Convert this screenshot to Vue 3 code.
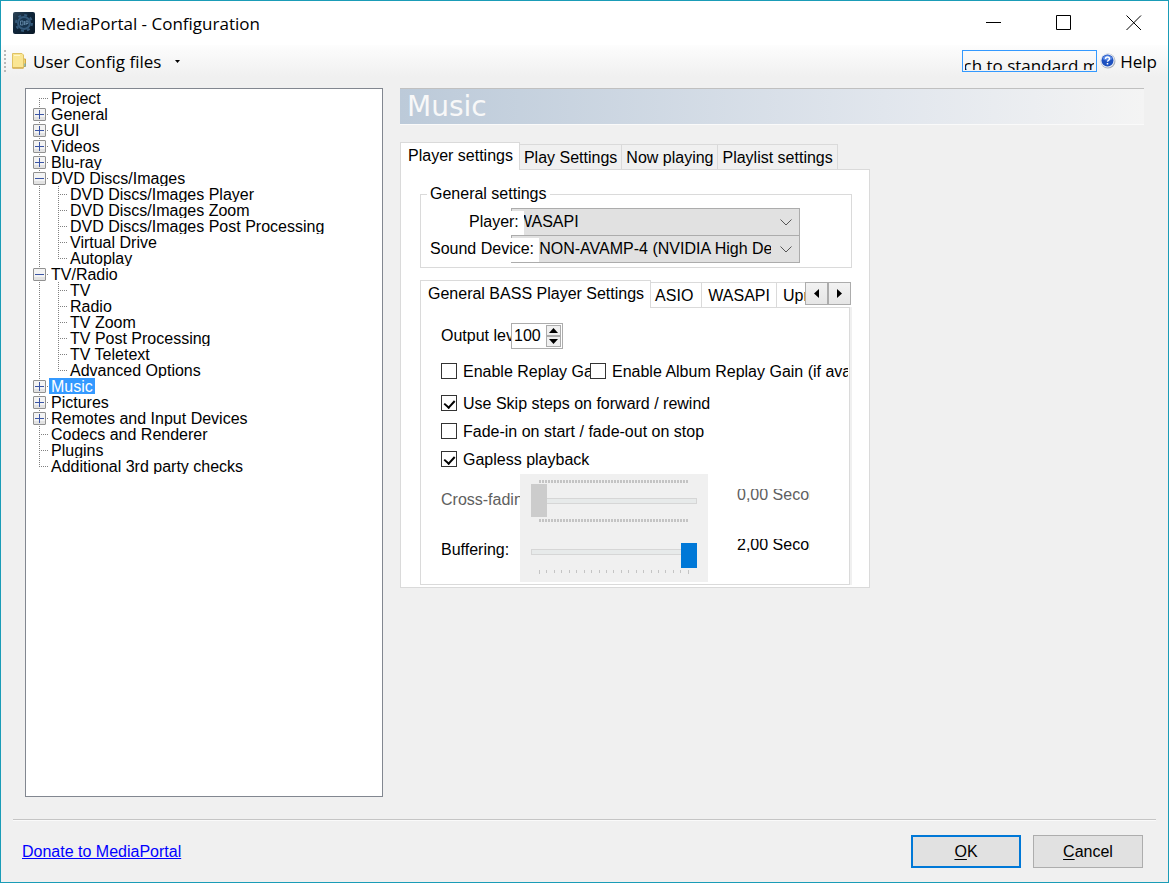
<script setup>
import { ref } from 'vue'

const tree = [
  { name: 'Project' },
  { name: 'General', sign: '+' },
  { name: 'GUI', sign: '+' },
  { name: 'Videos', sign: '+' },
  { name: 'Blu-ray', sign: '+' },
  {
    name: 'DVD Discs/Images',
    sign: '-',
    children: [
      'DVD Discs/Images Player',
      'DVD Discs/Images Zoom',
      'DVD Discs/Images Post Processing',
      'Virtual Drive',
      'Autoplay'
    ]
  },
  {
    name: 'TV/Radio',
    sign: '-',
    children: ['TV', 'Radio', 'TV Zoom', 'TV Post Processing', 'TV Teletext', 'Advanced Options']
  },
  { name: 'Music', sign: '+' },
  { name: 'Pictures', sign: '+' },
  { name: 'Remotes and Input Devices', sign: '+' },
  { name: 'Codecs and Renderer' },
  { name: 'Plugins' },
  { name: 'Additional 3rd party checks' }
]
const selected = ref('Music')

const tabs = ['Player settings', 'Play Settings', 'Now playing', 'Playlist settings']
const activeTab = ref('Player settings')
const bassTabs = ['General BASS Player Settings', 'ASIO', 'WASAPI', 'Upmixing']
const activeBassTab = ref('General BASS Player Settings')

const output = ref(100)
const replayGain = ref(false)
const albumGain = ref(false)
const skipSteps = ref(true)
const fade = ref(false)
const gapless = ref(true)
const crossFade = ref(0)
const buffering = ref(20)
</script>

<template>
  <div class="window">
    <header class="titlebar">
      <svg class="logo" viewBox="0 0 22 22" aria-hidden="true">
        <defs>
          <linearGradient id="logo-bg" x1="0" y1="0" x2="1" y2="1">
            <stop offset="0" stop-color="#2f4658" />
            <stop offset="0.4" stop-color="#10273c" />
            <stop offset="1" stop-color="#0a1826" />
          </linearGradient>
        </defs>
        <rect width="22" height="22" rx="2" fill="url(#logo-bg)" />
        <circle cx="11" cy="11" r="8" fill="none" stroke="#34597a" stroke-width="2" stroke-dasharray="3 3.28" />
        <circle cx="11" cy="11" r="6" fill="#17344e" stroke="#34597a" stroke-width="2" />
        <path d="M7.500 9h2.500v4h-2.500zM11.500 13v-4M13 13v-4h2v2.500h-2" fill="none" stroke="#6c93b2" stroke-width="0.800" />
      </svg>
      <span class="title">MediaPortal - Configuration</span>
      <div class="window-buttons">
        <button type="button" aria-label="Minimize">
          <svg viewBox="0 0 16 16"><path d="M0 7.500h15" /></svg>
        </button>
        <button type="button" aria-label="Maximize">
          <svg viewBox="0 0 16 16"><path d="M.5.5h14v14h-14z" /></svg>
        </button>
        <button type="button" aria-label="Close">
          <svg viewBox="0 0 16 16"><path d="M.5.5l14.500 14.500M15 .5l-14.500 14.500" /></svg>
        </button>
      </div>
    </header>

    <nav class="toolbar">
      <span class="grip"></span>
      <button type="button" class="tool">
        <svg class="folder" viewBox="0 0 15 17" aria-hidden="true">
          <path d="M11 6h2.500v7.500h-2.500z" fill="#f2d777" stroke="#d3aa41" />
          <path d="M12.500 10.500h1v3h-1z" fill="#4aa5df" />
          <path d="M.5.5h9.500l1.500 1.500v13h-11z" fill="#fae694" stroke="#dfc264" />
          <path d="M.5 15h11" stroke="#c99c39" />
          <path d="M2 2.500h6" stroke="#fff7cb" />
        </svg>
        <span class="caption">User Config files</span>
        <svg class="caret" viewBox="0 0 5 3" aria-hidden="true"><path d="M0 0h5l-2.500 3z" /></svg>
      </button>
      <button type="button" class="mode"><span>Switch to standard mode</span></button>
      <button type="button" class="tool help">
        <svg class="help-icon" viewBox="0 0 16 16" aria-hidden="true">
          <circle cx="8" cy="8" r="7.500" fill="#a9b0bd" />
          <circle cx="7.500" cy="7.500" r="7" fill="#e8edf5" />
          <circle cx="7.500" cy="7.500" r="6" fill="#1d50bf" />
          <path d="M2.500 6a5.200 5.200 0 0 1 10 0q-5 3-10 0z" fill="#5c8be6" />
          <path d="M5.500 6q0-2 2-2t2 1.800q0 1-1 1.500t-1 1.500M7.500 10v1.500" fill="none" stroke="#fff" stroke-width="1.500" />
        </svg>
        <span class="caption">Help</span>
      </button>
    </nav>

    <main class="body">
      <div class="tree-box">
        <ul class="tree" role="tree">
          <li v-for="node in tree" :key="node.name" class="node" role="treeitem">
            <div class="row">
              <span class="guide">
                <svg v-if="node.sign" class="sign" viewBox="0 0 13 13" aria-hidden="true">
                  <rect x="0.5" y="0.5" width="12" height="12" rx="0.500" fill="#f3f3f3" stroke="#919191" />
                  <path d="M1 9h11v3h-11z" fill="#e2e2e2" />
                  <path d="M2 6.500h9" stroke="#3b55a5" />
                  <path v-if="node.sign === '+'" d="M6.500 2v9" stroke="#3b55a5" />
                </svg>
              </span>
              <button type="button" :class="{ chosen: selected === node.name }" @click="selected = node.name">
                {{ node.name }}
              </button>
            </div>
            <ul v-if="node.children" class="children" role="group">
              <li v-for="child in node.children" :key="child" class="child" role="treeitem">
                <div class="row">
                  <span class="guide"></span>
                  <button type="button" :class="{ chosen: selected === child }" @click="selected = child">
                    {{ child }}
                  </button>
                </div>
              </li>
            </ul>
          </li>
        </ul>
      </div>

      <section class="content">
        <h1>Music</h1>

        <div class="player">
          <div class="tabs" role="tablist">
            <button
              v-for="tab in tabs"
              :key="tab"
              type="button"
              role="tab"
              :aria-selected="activeTab === tab"
              @click="activeTab = tab"
            >{{ tab }}</button>
          </div>
          <div class="page" role="tabpanel">
            <fieldset>
              <legend>General settings</legend>
              <div class="combo-row">
                <label for="player" class="short">Player:</label>
                <select id="player"><option>WASAPI</option></select>
                <svg class="chevron" viewBox="0 0 12 7" aria-hidden="true"><path d="M.5.5l5.500 5.500l5.500-5.500" /></svg>
              </div>
              <div class="combo-row">
                <label for="device">Sound Device:</label>
                <select id="device"><option>DENON-AVAMP-4 (NVIDIA High Definition Audio)</option></select>
                <svg class="chevron" viewBox="0 0 12 7" aria-hidden="true"><path d="M.5.5l5.500 5.500l5.500-5.500" /></svg>
              </div>
            </fieldset>

            <div class="bass">
              <div class="bass-head">
                <div class="tabs" role="tablist">
                  <button
                    v-for="tab in bassTabs"
                    :key="tab"
                    type="button"
                    role="tab"
                    :aria-selected="activeBassTab === tab"
                    @click="activeBassTab = tab"
                  >{{ tab }}</button>
                </div>
                <div class="scroller">
                  <button type="button" aria-label="Scroll left">
                    <svg viewBox="0 0 5 9"><path d="M5 0v9l-5-4.500z" /></svg>
                  </button>
                  <button type="button" aria-label="Scroll right">
                    <svg viewBox="0 0 5 9"><path d="M0 0v9l5-4.500z" /></svg>
                  </button>
                </div>
              </div>
              <div class="bass-page" role="tabpanel">
                <div class="output-row">
                  <label for="output">Output level:</label>
                  <div class="spinner">
                    <input id="output" v-model.number="output" type="text" />
                    <div class="steps">
                      <button type="button" aria-label="Increase" @click="output++">
                        <svg viewBox="0 0 9 5"><path d="M0 5h9l-4.500-5z" /></svg>
                      </button>
                      <button type="button" aria-label="Decrease" @click="output--">
                        <svg viewBox="0 0 9 5"><path d="M0 0h9l-4.500 5z" /></svg>
                      </button>
                    </div>
                  </div>
                </div>
                <div class="checks">
                  <div class="gain-row">
                    <label class="check"><input v-model="replayGain" type="checkbox" />Enable Replay Gain</label>
                    <label class="check"><input v-model="albumGain" type="checkbox" />Enable Album Replay Gain (if available)</label>
                  </div>
                  <label class="check skip"><input v-model="skipSteps" type="checkbox" />Use Skip steps on forward / rewind</label>
                  <label class="check"><input v-model="fade" type="checkbox" />Fade-in on start / fade-out on stop</label>
                  <label class="check"><input v-model="gapless" type="checkbox" />Gapless playback</label>
                </div>
                <div class="slider-row cross">
                  <label for="cross">Cross-fading:</label>
                  <div class="slider">
                    <div class="dense-ticks"></div>
                    <input id="cross" v-model="crossFade" type="range" min="0" max="160" disabled />
                    <div class="dense-ticks"></div>
                  </div>
                  <output for="cross">0,00 Seconds</output>
                </div>
                <div class="slider-row buffer">
                  <label for="buffer">Buffering:</label>
                  <div class="slider">
                    <input id="buffer" v-model="buffering" type="range" min="0" max="20" />
                    <div class="ticks"><i v-for="n in 21" :key="n"></i></div>
                  </div>
                  <output for="buffer">2,00 Seconds</output>
                </div>
              </div>
            </div>
          </div>
        </div>
      </section>
    </main>

    <footer class="footer">
      <a href="#donate">Donate to MediaPortal</a>
      <div class="actions">
        <button type="button" class="primary"><u>O</u>K</button>
        <button type="button"><u>C</u>ancel</button>
      </div>
    </footer>
  </div>
</template>

<style>
body {
  background: #f0f0f0;
}
</style>

<style scoped>
* {
  box-sizing: border-box;
}
.window {
  min-height: 100vh;
  display: flex;
  flex-direction: column;
  border: 1px solid #1a9cb7;
  background: #f0f0f0;
  color: #000;
  font: 16px/18px "Liberation Sans", Arial, sans-serif;
}
button,
input,
select {
  margin: 0;
  padding: 0;
  font: inherit;
  color: inherit;
}
button {
  border: 0;
  background: none;
  white-space: nowrap;
}

.titlebar {
  display: flex;
  align-items: center;
  height: 44px;
  padding: 0 26px 0 12px;
  background: #fff;
}
.logo {
  width: 22px;
  height: 22px;
  margin-right: 6px;
}
.title,
.toolbar {
  font: 17px/24px "Open Sans", "Noto Sans", sans-serif;
}
.title {
  flex: 1;
  padding-top: 2px;
  white-space: nowrap;
}
.window-buttons {
  display: flex;
  gap: 54px;
}
.window-buttons button,
.window-buttons svg {
  display: block;
  width: 16px;
  height: 16px;
}
.window-buttons path {
  fill: none;
  stroke: #000;
}

.toolbar {
  display: flex;
  align-items: center;
  height: 32px;
  padding: 0 11px 0 3px;
  background: linear-gradient(#fdfdfd, #f0f0f0);
}
.grip {
  width: 2px;
  height: 22px;
  margin-right: 6px;
  background: repeating-linear-gradient(#b8b8b8 0 2px, transparent 2px 4px);
}
.tool {
  display: flex;
  align-items: center;
}
.caption {
  padding-top: 2px;
}
.folder {
  width: 15px;
  height: 17px;
  margin-right: 6px;
}
.caret {
  width: 5px;
  height: 3px;
  margin-left: 14px;
}
.mode {
  width: 135px;
  height: 22px;
  margin: 0 3px 0 auto;
  padding: 1px 2px;
  border: 1px solid #3399ff;
}
.mode span {
  display: flex;
  justify-content: center;
  height: 18px;
  overflow: hidden;
  line-height: 28px;
}
.help-icon {
  width: 16px;
  height: 16px;
  margin-right: 4px;
}

.body {
  flex: 1;
  display: flex;
  gap: 17px;
  padding: 11px 24px 22px;
}
.tree-box {
  flex: 0 0 358px;
  padding: 1px 7px;
  border: 1px solid #828790;
  background: #fff;
}
ul {
  margin: 0;
  padding: 0;
  list-style: none;
}
.row {
  display: flex;
  height: 16px;
}
.row button {
  height: 16px;
  padding: 1px 2px 0;
  overflow: hidden;
  line-height: 16px;
}
.row .chosen {
  background: #3399ff;
  color: #fff;
}
.guide {
  flex: 0 0 16px;
  height: 16px;
  padding-top: 2px;
  background:
    repeating-linear-gradient(#808080 0 1px, transparent 1px 2px) 6px 0 / 1px 100% no-repeat,
    repeating-linear-gradient(90deg, #808080 0 1px, transparent 1px 2px) 6px 8px / 9px 1px no-repeat;
}
.node:first-child .guide {
  background-position: 6px 8px, 6px 8px;
}
.node:last-child .guide,
.child:last-child .guide {
  background-size: 1px 8px, 9px 1px;
}
.sign {
  display: block;
  width: 13px;
  height: 13px;
}
.children {
  padding-left: 19px;
  background: repeating-linear-gradient(#808080 0 1px, transparent 1px 2px) 6px 0 / 1px 100% no-repeat;
}

.content {
  flex: 1;
  min-width: 0;
}
h1 {
  height: 37px;
  margin: 0 0 17px;
  padding-left: 7px;
  border-top: 1px solid #c0c0c0;
  border-bottom: 1px solid #fafafa;
  background: linear-gradient(90deg, #bccad9, #e1e6ed 65%, #f4f4f4);
  color: #f8f8f8;
  font: 28px/36px "DejaVu Sans", Verdana, sans-serif;
}
.player {
  max-width: 470px;
}
.tabs {
  display: flex;
  align-items: flex-end;
  position: relative;
}
.tabs button {
  flex: none;
  height: 25px;
  padding: 2px 4px 0;
  border: 1px solid #dadada;
  border-left: 0;
  border-bottom: 0;
}
.tabs button[aria-selected='true'] {
  height: 28px;
  margin-bottom: -1px;
  padding: 0 6px 2px 7px;
  border-left: 1px solid #dadada;
  background: #fff;
}
.page {
  padding: 15px 17px 2px 19px;
  border: 1px solid #dadada;
  background: #fff;
}
fieldset {
  min-width: 0;
  margin: 0;
  padding: 5px 9px 4px;
  border: 1px solid #dadada;
}
legend {
  margin-left: -3px;
  padding: 0 3px;
}
.combo-row {
  display: grid;
  grid-template-columns: 81px 289px;
}
.combo-row + .combo-row {
  margin-top: -1px;
}
.combo-row > * {
  grid-row: 1;
}
.combo-row label {
  z-index: 1;
  grid-column: 1 / 3;
  justify-self: start;
  height: 24px;
  margin-top: 3px;
  padding-right: 5px;
  background: #fff;
  line-height: 21px;
}
.combo-row .short {
  margin-left: 39px;
}
select {
  grid-column: 2;
  appearance: none;
  height: 28px;
  padding: 0 28px 0 5px;
  border: 1px solid #acacac;
  border-radius: 0;
  background: #e1e1e1;
}
.chevron {
  grid-column: 2;
  justify-self: end;
  align-self: center;
  width: 12px;
  height: 7px;
  margin-right: 8px;
  fill: none;
  stroke: #555;
  pointer-events: none;
}

.bass {
  margin-top: 12px;
}
.bass-head {
  display: flex;
  align-items: flex-end;
}
.bass-head .tabs {
  flex: 1;
  min-width: 0;
  height: 28px;
  margin-bottom: -1px;
  padding-bottom: 1px;
  overflow: hidden;
}
.bass-head .tabs button:nth-child(n + 2) {
  padding: 2px 6px 0;
}
.bass-head .tabs button:nth-child(2) {
  padding: 2px 8px 0 4px;
}
.scroller {
  display: flex;
  flex: none;
  margin-bottom: 2px;
  padding-right: 1px;
}
.scroller button {
  display: grid;
  place-items: center;
  width: 23px;
  height: 23px;
  border: 1px solid #acacac;
  background: linear-gradient(#f2f2f2, #e6e6e6);
}
.scroller svg {
  width: 5px;
  height: 9px;
}
.bass-page {
  margin-right: 2px;
  padding: 15px 0 2px 20px;
  border: 1px solid #dadada;
  box-shadow: 2px 0 #f0f0f0;
}
.output-row {
  display: flex;
}
.output-row label {
  width: 70px;
  overflow: hidden;
  line-height: 26px;
  white-space: nowrap;
}
.spinner {
  display: flex;
  width: 52px;
  height: 26px;
  padding: 1px;
  border: 1px solid #acacac;
  background: #fff;
}
.spinner input {
  flex: 1;
  min-width: 0;
  border: 0;
  padding-left: 1px;
  outline: 0;
}
.steps {
  display: flex;
  flex-direction: column;
  width: 15px;
}
.steps button {
  flex: 1;
  display: grid;
  place-items: center;
  border: 1px solid #acacac;
  background: #f0f0f0;
}
.steps svg {
  width: 9px;
  height: 5px;
}
.checks {
  display: flex;
  flex-direction: column;
  gap: 8px;
  margin: 12px 1px 5px 0;
}
.gain-row {
  display: flex;
  overflow: hidden;
}
.check {
  display: flex;
  align-items: flex-start;
  gap: 6px;
  height: 20px;
  line-height: 22px;
  white-space: nowrap;
}
.skip {
  margin-top: 4px;
}
.gain-row .check:first-child {
  flex: 0 0 149px;
  overflow: hidden;
}
.check input {
  flex: none;
  appearance: none;
  width: 16px;
  height: 16px;
  margin-top: 2px;
  border: 1px solid #333;
  background: #fff;
}
.check input:checked::before {
  content: '';
  display: block;
  width: 5px;
  height: 8px;
  margin: 2px 0 0 4px;
  border: solid #000;
  border-width: 0 2px 2px 0;
  rotate: 42deg;
}
.slider-row {
  display: grid;
  grid-template-columns: 79px 188px 102px;
  align-items: start;
}
.slider-row > label {
  margin-top: 15px;
  overflow: hidden;
  line-height: 22px;
  white-space: nowrap;
}
.slider-row output {
  height: 14px;
  margin: 15px 0 0 29px;
  overflow: hidden;
  line-height: 11px;
  white-space: nowrap;
}
.buffer > label,
.buffer output {
  margin-top: 9px;
}
.cross {
  color: #606060;
}
.slider {
  display: flex;
  flex-direction: column;
  background: #f0f0f0;
}
.cross .slider {
  height: 56px;
  padding: 6px 11px 0;
}
.buffer .slider {
  height: 52px;
  padding: 13px 11px 0;
}
.dense-ticks {
  height: 3px;
  margin: 0 8px;
  background: repeating-linear-gradient(90deg, #c4c4c4 0 2px, transparent 2px 3px);
}
.ticks {
  display: flex;
  justify-content: space-between;
  margin: 10px 8px 0;
}
.ticks i {
  width: 1px;
  height: 3px;
  background: #c4c4c4;
}
.ticks i:first-child,
.ticks i:last-child {
  height: 4px;
}
input[type='range'] {
  appearance: none;
  display: block;
  width: 100%;
  height: 17px;
  background: none;
}
.cross input[type='range'] {
  height: 33px;
  margin: 1px 0 2px;
}
input[type='range']::-webkit-slider-runnable-track {
  height: 6px;
  box-shadow: inset 0 0 0 1px #d6d6d6;
  background: #e7eaea;
}
input[type='range']::-webkit-slider-thumb {
  appearance: none;
  width: 16px;
  height: 25px;
  margin-top: -6px;
  background: #0078d7;
}
.cross input[type='range']::-webkit-slider-thumb {
  height: 33px;
  margin-top: -14px;
  background: #ccc;
}

.footer {
  display: flex;
  justify-content: space-between;
  align-items: center;
  margin: 0 12px;
  padding: 15px 13px 14px 9px;
  border-top: 1px solid #c5c5c5;
  box-shadow: inset 0 1px #fafafa;
}
.footer a {
  color: #0000ff;
}
.actions {
  display: flex;
  gap: 12px;
}
.actions button {
  width: 110px;
  height: 33px;
  border: 1px solid #adadad;
  background: #e1e1e1;
}
.actions .primary {
  border: 2px solid #0078d7;
}
.actions u {
  text-underline-offset: 2px;
}
</style>
